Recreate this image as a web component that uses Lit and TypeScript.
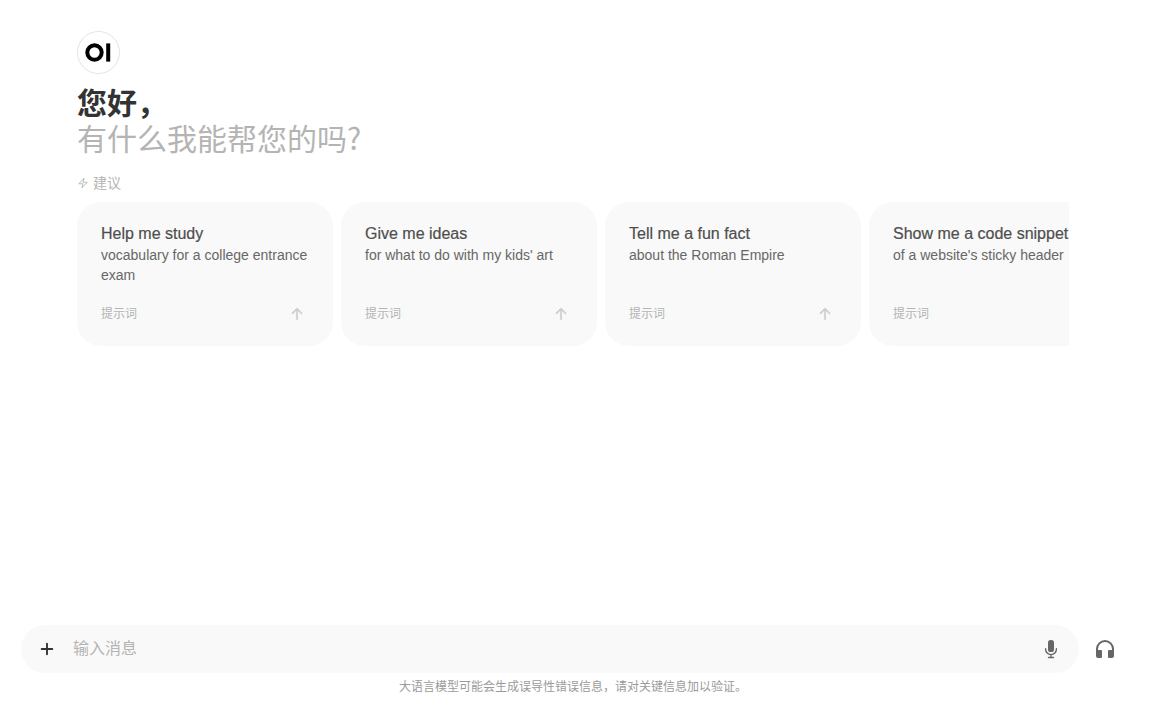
import { LitElement, html, css } from "lit";
import { customElement, property } from "lit/decorators.js";

interface Suggestion {
  title: string;
  detail: string;
}

const SUGGESTIONS: Suggestion[] = [
  { title: "Help me study", detail: "vocabulary for a college entrance exam" },
  { title: "Give me ideas", detail: "for what to do with my kids' art" },
  { title: "Tell me a fun fact", detail: "about the Roman Empire" },
  { title: "Show me a code snippet", detail: "of a website's sticky header" },
];

@customElement("prompt-card")
export class PromptCard extends LitElement {
  @property() heading = "";
  @property() detail = "";

  static styles = css`
    :host {
      display: block;
      flex: none;
      width: 256px;
    }
    .card {
      display: flex;
      flex-direction: column;
      justify-content: space-between;
      box-sizing: border-box;
      width: 100%;
      min-height: 144px;
      padding: 21px 24px 20px;
      border: 0;
      border-radius: 24px;
      background: #f9f9f9;
      font: inherit;
      text-align: left;
      cursor: pointer;
    }
    .card:hover {
      background: #f3f3f3;
    }
    .text,
    .title,
    .detail {
      display: block;
    }
    .title {
      font-size: 16px;
      line-height: 22px;
      color: #4e4e4e;
      white-space: nowrap;
      -webkit-text-stroke: 0.2px currentColor;
    }
    .detail {
      font-size: 14px;
      line-height: 20px;
      color: #676767;
    }
    .foot {
      display: flex;
      align-items: center;
      justify-content: space-between;
      padding-right: 4px;
      font-size: 12px;
      line-height: 24px;
      color: #b4b4b4;
    }
    .arrow {
      display: block;
      width: 16px;
      height: 16px;
      fill: #cdcdcd;
      stroke: #cdcdcd;
      stroke-width: 0.3;
    }
  `;

  render() {
    return html`
      <button class="card" type="button">
        <span class="text">
          <span class="title">${this.heading}</span>
          <span class="detail">${this.detail}</span>
        </span>
        <span class="foot">
          <span>提示词</span>
          <svg class="arrow" viewBox="0 0 16 16" aria-hidden="true">
            <path
              fill-rule="evenodd"
              d="M8 14a.75.75 0 0 1-.75-.75V4.56L4.03 7.78a.75.75 0 0 1-1.06-1.06l4.5-4.5a.75.75 0 0 1 1.06 0l4.5 4.5a.75.75 0 0 1-1.06 1.06L8.75 4.56v8.69A.75.75 0 0 1 8 14Z"
            />
          </svg>
        </span>
      </button>
    `;
  }
}

@customElement("app-root")
export class AppRoot extends LitElement {
  static styles = css`
    :host {
      display: flex;
      flex-direction: column;
      box-sizing: border-box;
      min-height: 100vh;
      padding: 31px 26px 14px 21px;
      background: #fff;
      font-family: "Liberation Sans", "Noto Sans CJK SC", sans-serif;
    }
    .welcome {
      flex: 1;
      min-width: 0;
      padding: 0 56px;
    }
    .logo {
      display: block;
      width: 43px;
      height: 43px;
    }
    .greeting {
      margin: 9px 0 0;
      font-family: "Noto Sans CJK SC", sans-serif;
      font-size: 30px;
      line-height: 36px;
      font-weight: 700;
      color: #333;
    }
    .question {
      margin: 0;
      font-family: "Noto Sans CJK SC", sans-serif;
      font-size: 30px;
      line-height: 36px;
      font-weight: 400;
      color: #b4b4b4;
    }
    .label {
      display: flex;
      align-items: center;
      gap: 4px;
      margin: 18px 0 9px;
      font-size: 14px;
      line-height: 20px;
      font-weight: 400;
      color: #b4b4b4;
    }
    .bolt {
      width: 12px;
      height: 12px;
      fill: none;
      stroke: #b4b4b4;
      stroke-width: 1.8;
      stroke-linejoin: round;
    }
    .cards {
      display: flex;
      gap: 8px;
      overflow: hidden;
    }
    .composer {
      display: flex;
      align-items: center;
      gap: 6px;
    }
    .box {
      display: flex;
      flex: 1;
      align-items: center;
      min-width: 0;
      height: 48px;
      box-sizing: border-box;
      padding: 0 8px;
      border-radius: 24px;
      background: #f9f9f9;
    }
    .message {
      flex: 1;
      min-width: 0;
      margin: 0;
      padding: 0 8px;
      border: 0;
      outline: 0;
      background: none;
      font: inherit;
      font-size: 16px;
      line-height: 24px;
      color: #333;
    }
    .message::placeholder {
      color: #b4b4b4;
      opacity: 1;
    }
    .tool {
      display: grid;
      place-items: center;
      flex: none;
      width: 40px;
      height: 40px;
      padding: 0;
      border: 0;
      border-radius: 50%;
      background: none;
      color: #676767;
      cursor: pointer;
    }
    .tool.add {
      width: 36px;
      color: #333;
    }
    .glyph {
      display: block;
      width: 20px;
      height: 20px;
      fill: currentColor;
    }
    .glyph.large {
      width: 24px;
      height: 24px;
    }
    .line {
      fill: none;
      stroke: currentColor;
      stroke-width: 1.4;
      stroke-linecap: round;
    }
    .notice {
      margin: 5px 0 0;
      font-size: 12px;
      line-height: 18px;
      text-align: center;
      color: #9b9b9b;
    }
  `;

  render() {
    return html`
      <main class="welcome">
        <svg class="logo" viewBox="0 0 43 43" role="img" aria-label="OI">
          <circle cx="21.5" cy="21.5" r="21" fill="#fff" stroke="#e3e3e3" />
          <circle cx="17.5" cy="21.5" r="7.2" fill="none" stroke="#000" stroke-width="4" />
          <rect x="29.2" y="12.4" width="4" height="18.2" fill="#000" />
        </svg>
        <h1 class="greeting">您好，</h1>
        <p class="question">有什么我能帮您的吗?</p>
        <h2 class="label">
          <svg class="bolt" viewBox="0 0 24 24" aria-hidden="true">
            <path d="m3.75 13.5 10.5-11.25L12 10.5h8.25L9.75 21.75 12 13.5H3.75Z" />
          </svg>
          建议
        </h2>
        <div class="cards">
          ${SUGGESTIONS.map(
            (s) => html`<prompt-card .heading=${s.title} .detail=${s.detail}></prompt-card>`,
          )}
        </div>
      </main>

      <form class="composer" @submit=${(e: Event) => e.preventDefault()}>
        <div class="box">
          <button class="tool add" type="button" aria-label="更多">
            <svg class="glyph" viewBox="0 0 16 16" aria-hidden="true">
              <path
                d="M8.75 3.75a.75.75 0 0 0-1.5 0v3.5h-3.5a.75.75 0 0 0 0 1.5h3.5v3.5a.75.75 0 0 0 1.5 0v-3.5h3.5a.75.75 0 0 0 0-1.5h-3.5v-3.5Z"
              />
            </svg>
          </button>
          <input class="message" type="text" aria-label="输入消息" placeholder="输入消息" />
          <button class="tool" type="button" aria-label="语音输入">
            <svg class="glyph" viewBox="0 0 20 20" aria-hidden="true">
              <rect x="7" y="1" width="6" height="12" rx="2.6" />
              <path class="line" d="M4.6 9.8v.4a5.4 5.4 0 0 0 10.8 0v-.4M10 15.6v2.7M7.5 18.5h5" />
            </svg>
          </button>
        </div>
        <button class="tool" type="button" aria-label="语音通话">
          <svg class="glyph large" viewBox="0 0 24 24" aria-hidden="true">
            <path
              d="M12 5a7 7 0 0 0-7 7v1h3a1 1 0 0 1 1 1v6a1 1 0 0 1-1 1H5a2 2 0 0 1-2-2v-7a9 9 0 0 1 18 0v7a2 2 0 0 1-2 2h-3a1 1 0 0 1-1-1v-6a1 1 0 0 1 1-1h3v-1a7 7 0 0 0-7-7Z"
            />
          </svg>
        </button>
      </form>
      <p class="notice">大语言模型可能会生成误导性错误信息，请对关键信息加以验证。</p>
    `;
  }
}
